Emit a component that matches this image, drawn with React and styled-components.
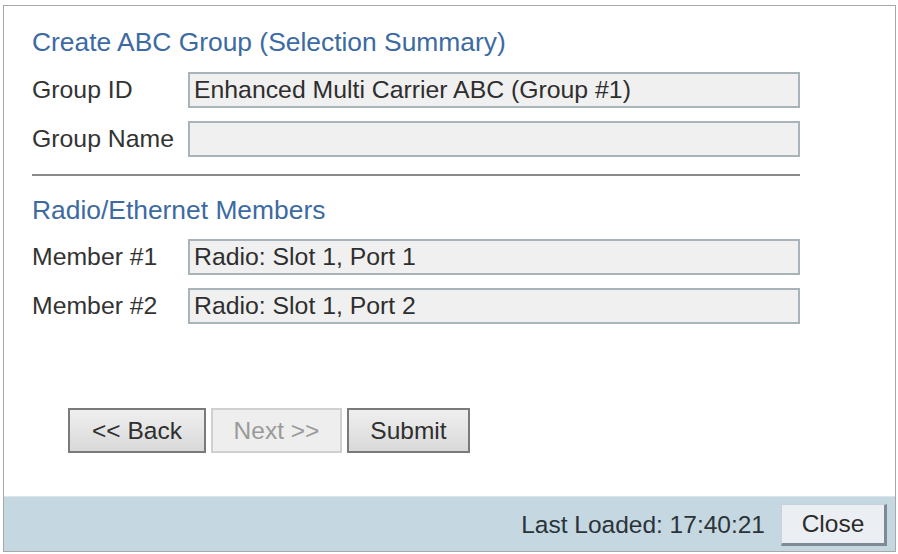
import React from "react";
import styled, { createGlobalStyle } from "styled-components";

const GlobalStyle = createGlobalStyle`
  html, body {
    margin: 0;
    padding: 0;
    background: #ffffff;
  }

  body {
    font-family: "Liberation Sans", Arial, sans-serif;
  }
`;

const GROUP_FIELDS = [
  { label: "Group ID", value: "Enhanced Multi Carrier ABC (Group #1)" },
  { label: "Group Name", value: "" },
];

const MEMBER_FIELDS = [
  { label: "Member #1", value: "Radio: Slot 1, Port 1" },
  { label: "Member #2", value: "Radio: Slot 1, Port 2" },
];

const App = () => {
  return (
    <>
      <GlobalStyle />
      <St.Page>
        <St.Dialog>
          <St.Body>
            <St.SectionTitle>Create ABC Group (Selection Summary)</St.SectionTitle>
            <St.FieldList>
              {GROUP_FIELDS.map((it) => (
                <St.FieldRow key={it.label}>
                  <St.Label>{it.label}</St.Label>
                  <St.Value>{it.value}</St.Value>
                </St.FieldRow>
              ))}
            </St.FieldList>

            <St.Divider />

            <St.SectionTitle $second>Radio/Ethernet Members</St.SectionTitle>
            <St.FieldList>
              {MEMBER_FIELDS.map((it) => (
                <St.FieldRow key={it.label}>
                  <St.Label>{it.label}</St.Label>
                  <St.Value>{it.value}</St.Value>
                </St.FieldRow>
              ))}
            </St.FieldList>

            <St.ButtonBar>
              <St.Button type="button" $width={138}>
                &lt;&lt; Back
              </St.Button>
              <St.Button type="button" $width={131} disabled>
                Next &gt;&gt;
              </St.Button>
              <St.Button type="button" $width={123}>
                Submit
              </St.Button>
            </St.ButtonBar>
          </St.Body>

          <St.Footer>
            <St.LoadedText>Last Loaded: 17:40:21</St.LoadedText>
            <St.CloseBtn type="button">Close</St.CloseBtn>
          </St.Footer>
        </St.Dialog>
      </St.Page>
    </>
  );
};

export default App;

const St = {
  Page: styled.div`
    width: 898px;
    height: 554px;
    padding: 5px 0 0 3px;
    box-sizing: border-box;
  `,

  Dialog: styled.div`
    display: flex;
    flex-direction: column;

    width: 893px;
    height: 547px;
    box-sizing: border-box;

    border: 1px solid #a8a8a8;
    background-color: #ffffff;
  `,

  Body: styled.div`
    flex: 1;
    display: flex;
    flex-direction: column;

    padding: 21px 0 0 28px;
  `,

  SectionTitle: styled.h2`
    margin: ${({ $second }) => ($second ? "19px 0 13px" : "0 0 14px")};

    color: #3c6aa3;
    line-height: 31px;
    font-weight: 400;
    font-size: 26.4px;
  `,

  FieldList: styled.div`
    display: flex;
    flex-direction: column;
    gap: 13px;
  `,

  FieldRow: styled.div`
    display: grid;
    grid-template-columns: 156px 612px;
    align-items: center;
  `,

  Label: styled.span`
    color: #333333;
    font-size: 24.8px;
    line-height: 28px;
  `,

  Value: styled.div`
    height: 36px;
    box-sizing: border-box;
    padding: 0 4px;

    border: 2px solid #a9b3ba;
    background-color: #f0f0f0;

    color: #2e2e2e;
    font-size: 24.8px;
    line-height: 32px;
    white-space: nowrap;
  `,

  Divider: styled.hr`
    width: 768px;
    height: 2px;
    margin: 17px 0 0;

    border: none;
    background-color: #8a8a8a;
  `,

  ButtonBar: styled.div`
    display: flex;
    gap: 5px;

    margin: 84px 0 0 36px;
  `,

  Button: styled.button`
    width: ${({ $width }) => $width}px;
    height: 45px;
    padding: 0;

    border: 2px solid #7a7a7a;
    border-radius: 0;
    background: linear-gradient(#efefef, #d9d9d9);

    color: #2f2f2f;
    font-family: "Liberation Sans", Arial, sans-serif;
    font-size: 24.5px;

    &:disabled {
      border-color: #d0d0d0;
      background: #eeeeee;
      color: #9a9a9a;
    }
  `,

  Footer: styled.div`
    display: flex;
    align-items: center;
    justify-content: flex-end;
    gap: 16px;

    height: 55px;
    padding: 1px 8px 0 0;
    box-sizing: border-box;

    border-top: 1px solid #dbe6ec;
    background-color: #c5d8e2;
  `,

  LoadedText: styled.span`
    color: #2b3338;
    font-size: 24.5px;
  `,

  CloseBtn: styled.button`
    width: 106px;
    height: 42px;
    padding: 0;

    border: 1px solid #c8d2da;
    border-right: 3px solid #7e8a94;
    border-bottom: 3px solid #7e8a94;
    border-radius: 0;
    background-color: #ebeff4;

    color: #2b2b2b;
    font-family: "Liberation Sans", Arial, sans-serif;
    font-size: 24.5px;
  `,
};
